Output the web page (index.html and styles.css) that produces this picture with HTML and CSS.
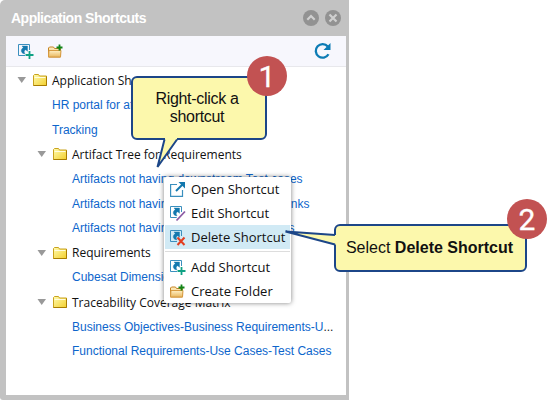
FILE: index.html
```
<!DOCTYPE html>
<html lang="en">
<head>
  <meta charset="UTF-8" />
  <title>Application Shortcuts</title>
  <link rel="stylesheet" href="styles.css">
</head>
<body>

  <!-- Shared icons -->
  <svg class="defs" width="0" height="0">
    <linearGradient id="yellow" x2="1" y2="1">
      <stop offset="0" stop-color="#fffbb0"/>
      <stop offset="1" stop-color="#f3cf2c"/>
    </linearGradient>
    <linearGradient id="orange" x2="0" y2="1">
      <stop offset="0" stop-color="#fff0c4"/>
      <stop offset="1" stop-color="#e9b860"/>
    </linearGradient>
    <symbol id="arrow" viewBox="0 0 12 10">
      <path d="M1.500 2h8.500L5.700 8z" fill="#999"/>
    </symbol>
    <symbol id="folder" viewBox="0 0 14 12">
      <path d="M.5 11.500V1.500l1-1h4l1 1.500h7v9.500z" fill="url(#yellow)" stroke="#c9a21c"/>
      <path d="M1.500 3.500h11" stroke="#fffde0"/>
      <path d="M.5 11.500h13v-9" fill="none" stroke="#a87c00"/>
    </symbol>
    <symbol id="shortcut" viewBox="0 0 17 17">
      <path d="M12.500 7V1.500h-11v11H8" fill="none" stroke="#3a8fbe"/>
      <path d="M5 3h5.500v5.300L8.700 6.700C7 7.500 6.700 9 8 10.800 4.300 10.800 2.800 7 6.300 4.500z" fill="#1378ae" stroke="#1378ae" stroke-width=".4"/>
    </symbol>
    <symbol id="plus" viewBox="0 0 17 17">
      <path d="M12.500 8v8M8.500 12h8" stroke="#0fa184" stroke-width="1.800"/>
    </symbol>
    <symbol id="newfolder" viewBox="0 0 17 16">
      <path d="M1.500 13.500v-9l1-1h4l1 1.500h6v8.500z" fill="url(#orange)" stroke="#c58324"/>
      <path d="M1.500 13.500l.5-6.500h12l-.5 6.500z" fill="url(#orange)" stroke="#d79b43"/>
      <path d="M12.500 1v6M9.500 4h6" stroke="#128417" stroke-width="1.800"/>
    </symbol>
  </svg>

  <div class="panel">
    <div class="panel-header">
      <h1>Application Shortcuts</h1>
      <svg class="round" viewBox="0 0 16 16"><circle cx="8" cy="8" r="8"/><path d="M4.300 9.700L8 6l3.700 3.700"/></svg>
      <svg class="round" viewBox="0 0 16 16"><circle cx="8" cy="8" r="8"/><path d="M4.500 4.500l7 7M11.500 4.500l-7 7"/></svg>
    </div>
    <div class="toolbar">
      <svg class="icon"><use href="#shortcut"/><use href="#plus"/></svg>
      <svg class="icon"><use href="#newfolder"/></svg>
      <svg class="refresh" viewBox="0 0 18 18">
        <path d="M14.500 12.200A6.800 6.800 0 1 1 13.800 4.500" fill="none" stroke="#0d7cb5" stroke-width="2.300"/>
        <path d="M16.500 1v7h-7z" fill="#0d7cb5"/>
      </svg>
    </div>
    <div class="tree">
      <div class="row folder root"><svg class="arrow"><use href="#arrow"/></svg><svg class="dir"><use href="#folder"/></svg><span>Application Shortcuts</span></div>
      <div class="row link top">HR portal for attendance</div>
      <div class="row link top">Tracking</div>
      <div class="row folder"><svg class="arrow"><use href="#arrow"/></svg><svg class="dir"><use href="#folder"/></svg><span>Artifact Tree for Requirements</span></div>
      <div class="row link">Artifacts not having downstream Test cases</div>
      <div class="row link">Artifacts not having downstream Traces links</div>
      <div class="row link">Artifacts not having downstream Test runs</div>
      <div class="row folder"><svg class="arrow"><use href="#arrow"/></svg><svg class="dir"><use href="#folder"/></svg><span>Requirements</span></div>
      <div class="row link">Cubesat Dimensions</div>
      <div class="row folder"><svg class="arrow"><use href="#arrow"/></svg><svg class="dir"><use href="#folder"/></svg><span>Traceability Coverage Matrix</span></div>
      <div class="row link">Business Objectives-Business Requirements-U<span class="dots">...</span></div>
      <div class="row link">Functional Requirements-Use Cases-Test Cases</div>
    </div>
  </div>

  <!-- Context menu -->
  <div class="menu">
    <div class="item">
      <svg class="icon" viewBox="0 0 17 17"><path d="M8 3.500H1.600v11.900h11.900V9" fill="none" stroke="#3a8fbe" stroke-width="1.200"/><path d="M7 10L14 3" stroke="#1378ae" stroke-width="2"/><path d="M9.500 1H16v6.500z" fill="#1378ae"/></svg>
      <span>Open Shortcut</span>
    </div>
    <div class="item">
      <svg class="icon" viewBox="0 0 17 17"><use href="#shortcut"/><path d="M7.500 15.500l8.500-9" stroke="#fff" stroke-width="4"/><path d="M7.500 15.500l8.500-9" stroke="#8c5ba5" stroke-width="1.800"/></svg>
      <span>Edit Shortcut</span>
    </div>
    <div class="item active">
      <svg class="icon" viewBox="0 0 17 17"><use href="#shortcut"/><path d="M8.500 8.500l7 7.500M15.500 8.500l-7 7.500" stroke="#e23d20" stroke-width="2"/></svg>
      <span>Delete Shortcut</span>
    </div>
    <div class="separator"></div>
    <div class="item">
      <svg class="icon"><use href="#shortcut"/><use href="#plus"/></svg>
      <span>Add Shortcut</span>
    </div>
    <div class="item">
      <svg class="icon"><use href="#newfolder"/></svg>
      <span>Create Folder</span>
    </div>
  </div>

  <!-- Step 1 -->
  <div class="callout step1">
    <svg class="tail" viewBox="0 0 30 34"><path d="M9 0V2L1.500 30 21 2V0z" fill="#fcf8ac"/><path d="M8.500 1.500L1.500 29 21 1.500" fill="none"/></svg>
    <p>Right-click a<br>shortcut</p>
    <div class="badge">1</div>
  </div>

  <!-- Step 2 -->
  <div class="callout step2">
    <svg class="tail" viewBox="0 0 54 20"><path d="M54 6h-3L2 2.500l49 13h3z" fill="#fcf8ac"/><path d="M51 6L1.500 2.500l49.500 13" fill="none"/></svg>
    <p>Select <b>Delete Shortcut</b></p>
    <div class="badge">2</div>
  </div>

</body>
</html>
```
FILE: styles.css
```
body {
  margin: 0; background: #fff; overflow: hidden;
  font-family: "Open Sans", sans-serif; font-size: 13px;
}
.defs { position: absolute; }
.panel {
  width: 349px; height: 400px; box-sizing: border-box;
  display: flex; flex-direction: column;
  background: #c2c2c2; padding: 0 3px 5px 6px;
  border-radius: 5px 0 0 3px;
}
.panel-header {
  height: 36px; display: flex; align-items: center; gap: 6px;
  padding: 0 5px; box-sizing: border-box;
}
.panel-header h1 {
  flex: 1; margin: 0; color: #fff; letter-spacing: -0.500px;
  font: bold 14px "Liberation Sans", Arial, sans-serif;
}
.round { width: 16px; height: 16px; }
.round circle { fill: #929292; }
.round path { fill: none; stroke: #d0d0d0; stroke-width: 2.200; }
.toolbar {
  height: 30px; background: #f7f7fd; border-bottom: 1px solid #e8e8ec;
  display: flex; align-items: center; gap: 13px; padding: 0 14px 0 11px;
}
.icon { width: 17px; height: 17px; flex: none; }
.refresh { width: 18px; height: 18px; margin-left: auto; }
.tree {
  flex: 1; background: #fff; padding-top: 1px;
}
.row {
  height: 24.650px; display: flex; align-items: center;
  white-space: nowrap; box-sizing: border-box;
}
.folder { padding-left: 30px; color: #111; font-size: 12px; }
.root { padding-left: 10px; }
.arrow { width: 12px; height: 10px; margin-right: 5px; }
.dir { width: 14px; height: 12px; margin-right: 5px; }
.link {
  padding-left: 66px; color: #0d66cc;
  font-family: "Liberation Sans", Arial, sans-serif; font-size: 12px;
}
.top { padding-left: 46px; }
.dots { color: #222; }

.menu {
  position: absolute; left: 164px; top: 177px;
  width: 127px; height: 126px; padding: 0 1px; box-sizing: border-box;
  background: #fff; border-radius: 2px;
  box-shadow: 0 0 5px rgba(0, 0, 0, 0.5);
}
.item {
  height: 24px; display: flex; align-items: center; gap: 5px;
  padding-left: 4px; white-space: nowrap; color: #111;
}
.active { background: #d1eaf5; }
.separator { height: 1px; background: #ddd; margin: 2px 0 3px; }

.callout {
  position: absolute; box-sizing: border-box;
  display: flex; align-items: center; justify-content: center;
  background: #fcf8ac; border: 2px solid #1c4688; border-radius: 6px;
  font-family: "Liberation Sans", Arial, sans-serif; font-size: 16px;
  color: #111;
}
.callout p { margin: 0; line-height: 18px; text-align: center; white-space: nowrap; }
.step1 { left: 131px; top: 76px; width: 136px; height: 64px; }
.step1 p { letter-spacing: -0.300px; padding-right: 4px; }
.step2 { left: 334px; top: 224px; width: 193px; height: 48px; }
.step2 p { padding-right: 2px; }
.tail { position: absolute; stroke: #1c4688; stroke-width: 2; }
.tail path:first-child { stroke: none; }
.step1 .tail { left: 23px; top: 60px; width: 30px; height: 34px; }
.step2 .tail { left: -52px; top: 3px; width: 54px; height: 20px; }
.badge {
  position: absolute; width: 40px; height: 40px; border-radius: 50%;
  background: #c25252; color: #fff; font: 30px/41px Roboto, sans-serif;
  -webkit-text-stroke: 0.300px #fff;
  text-align: center;
}
.step1 .badge { left: 114px; top: -22px; }
.step2 .badge { left: 171px; top: -27px; }
```
